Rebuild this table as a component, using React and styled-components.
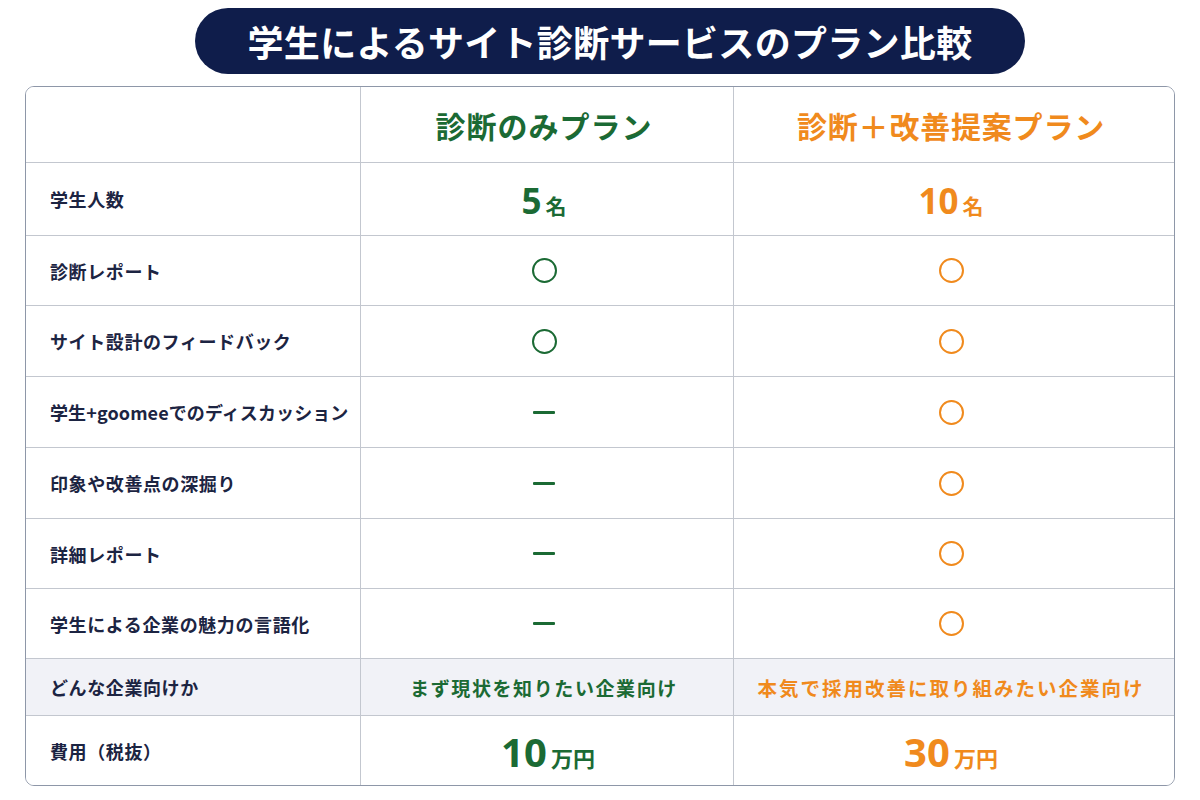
import React from "react";
import styled, { createGlobalStyle } from "styled-components";

const Global = createGlobalStyle`
  html, body { margin: 0; padding: 0; background: #ffffff; }
  body { font-family: "Noto Sans CJK JP", "Noto Sans", sans-serif; }
`;

const GREEN = "#1b6a34";
const ORANGE = "#f08a1d";
const NAVY = "#1c2442";

const Page = styled.div`
  width: 1200px;
  height: 800px;
  box-sizing: border-box;
  padding-top: 8px;
  display: flex;
  flex-direction: column;
  align-items: center;
`;

const Title = styled.h1`
  margin: 0 0 0 20px;
  width: 830px;
  height: 66px;
  box-sizing: border-box;
  border-radius: 33px;
  background: #0f1d4b;
  color: #ffffff;
  font-size: 36px;
  font-weight: 700;
  letter-spacing: 0.3px;
  display: flex;
  align-items: center;
  justify-content: center;
`;

const Table = styled.div`
  margin-top: 12px;
  width: 1150px;
  box-sizing: border-box;
  border: 1.5px solid #8e97a8;
  border-radius: 9px;
  overflow: hidden;
  display: grid;
  grid-template-columns: 335px 373px 1fr;
  grid-template-rows: 76px 73px 70px 71px 71px 71px 70px 70px 57px 69px;
  background: #fff;
`;

const Cell = styled.div`
  display: flex;
  align-items: center;
  justify-content: ${(p) => (p.$label ? "flex-start" : "center")};
  padding-left: ${(p) => (p.$label ? "24px" : "0")};
  padding-right: ${(p) => (p.$label ? "0" : "6px")};
  box-sizing: border-box;
  white-space: nowrap;
  border-right: ${(p) => (p.$last ? "none" : "1px solid #c3c7cf")};
  border-bottom: ${(p) => (p.$bottom ? "none" : "1px solid #c3c7cf")};
  background: ${(p) => (p.$shade ? "#f1f2f7" : "#ffffff")};
`;

const Label = styled.span`
  font-size: 18px;
  font-weight: 600;
  color: ${NAVY};
  letter-spacing: ${(p) => (p.$tight ? 0.1 : 0.6)}px;
  white-space: nowrap;
`;

const PlanName = styled.span`
  font-size: 30px;
  font-weight: 700;
  color: ${(p) => p.$color};
  letter-spacing: ${(p) => p.$ls || 1}px;
`;

const Amount = styled.span`
  color: ${(p) => p.$color};
  font-weight: 700;
  display: flex;
  align-items: baseline;
  font-family: "Noto Sans", "Noto Sans CJK JP", sans-serif;
  margin-top: 2px;
  margin-left: ${(p) => p.$shift || 0}px;
`;

const Num = styled.span`
  font-size: ${(p) => p.$size}px;
  font-weight: 700;
  line-height: 1;
`;

const Unit = styled.span`
  font-family: "Noto Sans CJK JP", sans-serif;
  font-size: ${(p) => p.$size}px;
  font-weight: 700;
  margin-left: 4px;
  line-height: 1;
`;

const Ring = styled.span`
  width: 25px;
  height: 25px;
  box-sizing: border-box;
  border: 2px solid ${(p) => p.$color};
  border-radius: 50%;
  display: block;
`;

const Dash = styled.span`
  width: 22px;
  height: 3px;
  background: ${(p) => p.$color};
  display: block;
  border-radius: 1px;
`;

const Target = styled.span`
  font-size: ${(p) => p.$size}px;
  font-weight: 600;
  color: ${(p) => p.$color};
  letter-spacing: ${(p) => p.$ls}px;
`;

const rows = [
  { label: "診断レポート", a: "ring", b: "ring" },
  { label: "サイト設計のフィードバック", a: "ring", b: "ring" },
  { label: "学生+goomeeでのディスカッション", a: "dash", b: "ring", tight: true },
  { label: "印象や改善点の深掘り", a: "dash", b: "ring" },
  { label: "詳細レポート", a: "dash", b: "ring" },
  { label: "学生による企業の魅力の言語化", a: "dash", b: "ring" },
];

const Mark = ({ kind, color }) =>
  kind === "ring" ? <Ring $color={color} /> : <Dash $color={color} />;

export default function App() {
  return (
    <>
      <Global />
      <Page>
        <Title>学生によるサイト診断サービスのプラン比較</Title>
        <Table>
          <Cell $label />
          <Cell>
            <PlanName $color={GREEN} $ls={1}>診断のみプラン</PlanName>
          </Cell>
          <Cell $last>
            <PlanName $color={ORANGE} $ls={0.8}>診断＋改善提案プラン</PlanName>
          </Cell>

          <Cell $label>
            <Label>学生人数</Label>
          </Cell>
          <Cell>
            <Amount $color={GREEN}>
              <Num $size={35}>5</Num>
              <Unit $size={21}>名</Unit>
            </Amount>
          </Cell>
          <Cell $last>
            <Amount $color={ORANGE}>
              <Num $size={35}>10</Num>
              <Unit $size={21}>名</Unit>
            </Amount>
          </Cell>

          {rows.map((r) => (
            <React.Fragment key={r.label}>
              <Cell $label>
                <Label $tight={r.tight}>{r.label}</Label>
              </Cell>
              <Cell>
                <Mark kind={r.a} color={GREEN} />
              </Cell>
              <Cell $last>
                <Mark kind={r.b} color={ORANGE} />
              </Cell>
            </React.Fragment>
          ))}

          <Cell $label $shade>
            <Label>どんな企業向けか</Label>
          </Cell>
          <Cell $shade>
            <Target $color={GREEN} $size={19} $ls={1.6}>まず現状を知りたい企業向け</Target>
          </Cell>
          <Cell $shade $last>
            <Target $color={ORANGE} $size={19.5} $ls={2}>本気で採用改善に取り組みたい企業向け</Target>
          </Cell>

          <Cell $label $bottom>
            <Label>費用（税抜）</Label>
          </Cell>
          <Cell $bottom>
            <Amount $color={GREEN} $shift={8}>
              <Num $size={40}>10</Num>
              <Unit $size={22}>万円</Unit>
            </Amount>
          </Cell>
          <Cell $bottom $last>
            <Amount $color={ORANGE} $shift={0}>
              <Num $size={40}>30</Num>
              <Unit $size={22}>万円</Unit>
            </Amount>
          </Cell>
        </Table>
      </Page>
    </>
  );
}
